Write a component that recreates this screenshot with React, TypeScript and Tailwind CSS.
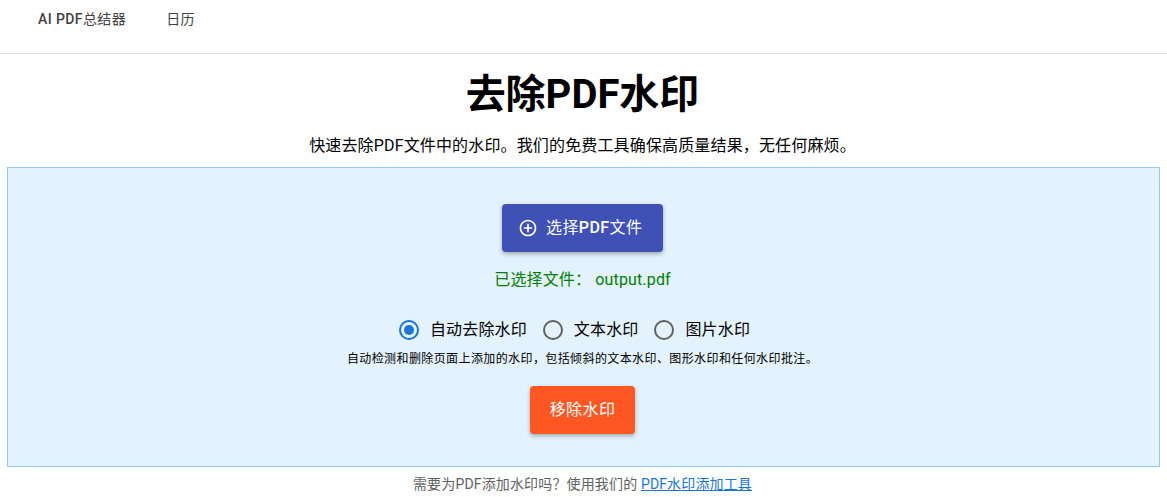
const cjk = "font-['Roboto','Noto_Sans_CJK_SC',sans-serif]";

const Radio = ({ label, checked }: { label: string; checked?: boolean }) => (
  <label className="mr-[16px] flex items-center">
    <span
      className={`flex h-[20px] w-[20px] items-center justify-center rounded-full border-2 ${
        checked ? 'border-[#1976d2]' : 'border-[#616161]'
      }`}>
      {checked && <span className="h-[10px] w-[10px] rounded-full bg-[#1976d2]" />}
    </span>
    <span className="ml-[11px] text-base tracking-[0.15px] text-black">{label}</span>
  </label>
);

export default function App() {
  return (
    <div className={`min-h-[497px] overflow-hidden bg-white ${cjk}`}>
      <nav className="flex h-[54px] items-start gap-[40px] border-b border-[#e0e0e0] pl-[38px] pt-[9px] text-sm tracking-[0.4px] text-[#424242]">
        <a>
          <span className="font-medium">AI PDF</span>总结器
        </a>
        <a>日历</a>
      </nav>

      <h1 className="mt-[13px] pr-[2px] text-center text-[40px] font-bold leading-[56px] text-black">去除PDF水印</h1>
      <p className="mt-[11px] pr-[2px] text-center text-base leading-[24px] tracking-[0.15px] text-black">
        快速去除PDF文件中的水印。我们的免费工具确保高质量结果，无任何麻烦。
      </p>

      <section className="mx-[7px] mt-[9px] flex h-[300px] flex-col items-center border border-[#90caf9] bg-[#e3f2fd] pr-[2px] pt-[36px]">
        <button className="flex h-[48px] w-[161px] items-center gap-[8px] rounded bg-[#3f51b5] pl-[16px] text-base tracking-[0.4px] text-white shadow-[0_2px_4px_rgba(0,0,0,0.3)]">
          <svg width="20" height="20" viewBox="0 0 24 24" fill="currentColor">
            <path d="M13 7h-2v4H7v2h4v4h2v-4h4v-2h-4V7zm-1-5C6.49 2 2 6.49 2 12s4.49 10 10 10 10-4.49 10-10S17.51 2 12 2zm0 18c-4.41 0-8-3.59-8-8s3.59-8 8-8 8 3.59 8 8-3.59 8-8 8z" />
          </svg>
          <span>
            选择<span className="font-medium">PDF</span>文件
          </span>
        </button>
        <p className="mt-[16px] text-base leading-[24px] tracking-[0.15px] text-[#008000]">已选择文件： output.pdf</p>
        <div className="mt-[26px] flex items-center">
          <Radio label="自动去除水印" checked />
          <Radio label="文本水印" />
          <Radio label="图片水印" />
        </div>
        <p className="mt-[8px] text-xs leading-[18px] tracking-[0.4px] text-black">
          自动检测和删除页面上添加的水印，包括倾斜的文本水印、图形水印和任何水印批注。
        </p>
        <button className="mt-[18px] h-[48px] w-[105px] rounded bg-[#ff5722] text-base tracking-[0.4px] text-white shadow-[0_2px_4px_rgba(0,0,0,0.3)]">
          移除水印
        </button>
      </section>

      <p className="mt-[7px] pr-[2px] text-center text-sm leading-[20px] tracking-[0.15px] text-[#616161]">
        需要为PDF添加水印吗？使用我们的 <a className="text-[#1976d2] underline">PDF水印添加工具</a>
      </p>
    </div>
  );
}
